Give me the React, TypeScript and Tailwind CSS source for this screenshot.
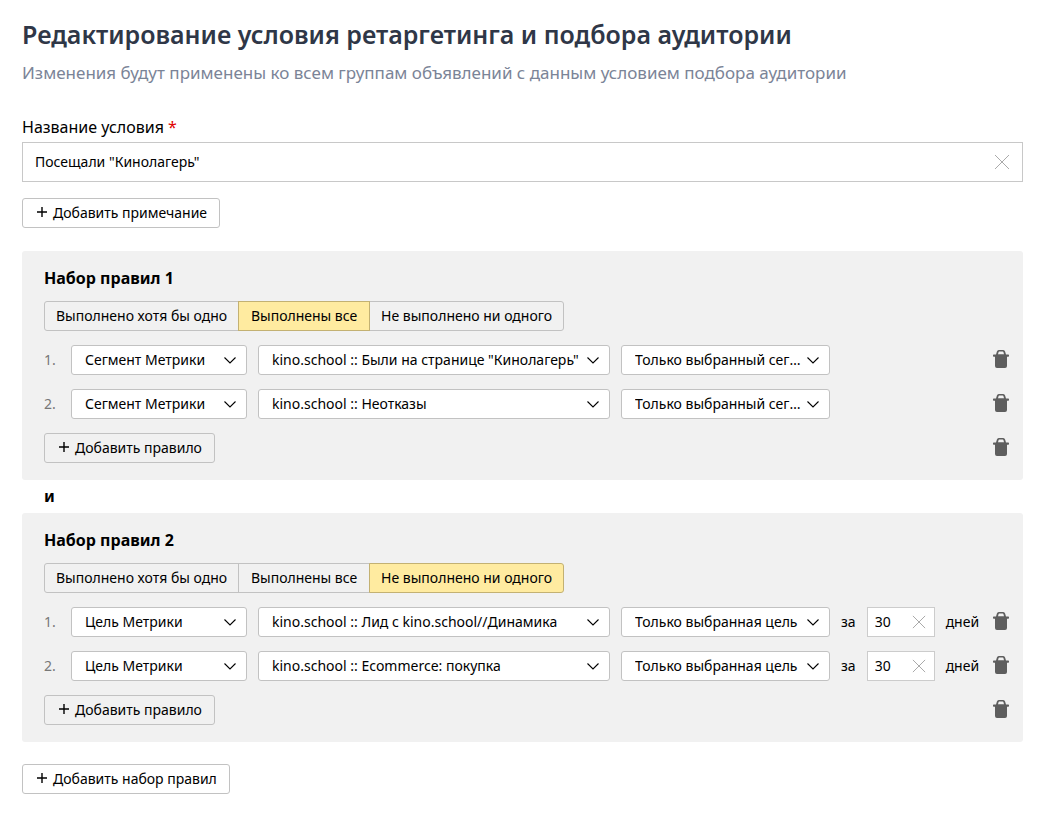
import React, { useState } from 'react';
import clsx from 'clsx';

type Rule = {
  type: string;
  source: string;
  scope: string;
  days?: number;
};

type RuleSet = {
  title: string;
  mode: number;
  rules: Rule[];
};

const modes = ['Выполнено хотя бы одно', 'Выполнены все', 'Не выполнено ни одного'];

const ruleSets: RuleSet[] = [
  {
    title: 'Набор правил 1',
    mode: 1,
    rules: [
      {
        type: 'Сегмент Метрики',
        source: 'kino.school :: Были на странице "Кинолагерь"',
        scope: 'Только выбранный сегмент',
      },
      {
        type: 'Сегмент Метрики',
        source: 'kino.school :: Неотказы',
        scope: 'Только выбранный сегмент',
      },
    ],
  },
  {
    title: 'Набор правил 2',
    mode: 2,
    rules: [
      {
        type: 'Цель Метрики',
        source: 'kino.school :: Лид с kino.school//Динамика',
        scope: 'Только выбранная цель',
        days: 30,
      },
      {
        type: 'Цель Метрики',
        source: 'kino.school :: Ecommerce: покупка',
        scope: 'Только выбранная цель',
        days: 30,
      },
    ],
  },
];

const PlusIcon = () => (
  <svg className="mb-0.5 h-2.5 w-2.5" viewBox="0 0 10 10" fill="none" stroke="currentColor" strokeWidth="1.4" aria-hidden="true">
    <path d="M5 0v10M0 5h10" />
  </svg>
);

const CrossIcon = ({ className }: { className: string }) => (
  <svg className={className} viewBox="0 0 16 16" fill="none" stroke="currentColor" aria-hidden="true">
    <path d="M1 1l14 14M15 1L1 15" vectorEffect="non-scaling-stroke" />
  </svg>
);

const TrashButton = ({ label }: { label: string }) => (
  <button type="button" aria-label={label} className="ml-auto shrink-0 pb-0.5 text-[#5e5e5e]">
    <svg className="h-[18px] w-4" viewBox="0 0 16 18" fill="currentColor" aria-hidden="true">
      <path
        fillRule="evenodd"
        d="M5.8 0h4.4a2 2 0 0 1 1.9 1.5l.9 3h2.3a.7.7 0 0 1 .7.7v.9a.7.7 0 0 1-.7.7H14V16a2 2 0 0 1-2 2H4a2 2 0 0 1-2-2V6.800H.7A.7.7 0 0 1 0 6.100v-.9a.7.7 0 0 1 .7-.7H3l.9-3A2 2 0 0 1 5.800 0zM6.300 1.500a.7.7 0 0 0-.7.5L5 4.200h6L10.400 2a.7.7 0 0 0-.7-.5z"
      />
    </svg>
  </button>
);

const AddButton = ({ children }: { children: React.ReactNode }) => (
  <button type="button" className="flex h-[30px] items-center gap-1.5 rounded-[3px] border border-[#c2c2c2] pr-3 pl-3.5 text-sm">
    <PlusIcon />
    {children}
  </button>
);

const Select = ({ label, value, className }: { label: string; value: string; className: string }) => (
  <div className={clsx('relative min-w-0', className)}>
    <select
      aria-label={label}
      defaultValue={value}
      className="h-[30px] w-full appearance-none truncate rounded-[3px] border border-[#c2c2c2] bg-white pr-6 pl-[13px] text-sm"
    >
      <option>{value}</option>
    </select>
    <svg
      className="pointer-events-none absolute top-3 right-[11px] h-[7px] w-3"
      viewBox="0 0 12 7"
      fill="none"
      stroke="currentColor"
      strokeWidth="1.1"
      aria-hidden="true"
    >
      <path d="M.5.5L6 6l5.5-5.5" />
    </svg>
  </div>
);

const RuleRow = ({ rule, index }: { rule: Rule; index: number }) => (
  <li className="flex items-center gap-[11px]">
    <span className="w-4 shrink-0 text-sm text-[#777]">{index + 1}.</span>
    <Select label="Тип условия" value={rule.type} className="w-44" />
    <Select label="Источник" value={rule.source} className="w-88" />
    <Select label="Область" value={rule.scope} className="w-[209px]" />
    {rule.days !== undefined && (
      <label className="flex items-center gap-[11px] text-sm">
        за
        <span className="flex h-[30px] w-[68px] items-center border border-[#ccc] bg-white pr-2 pl-[7px]">
          <input type="text" inputMode="numeric" defaultValue={rule.days} className="min-w-0 flex-1 outline-none" />
          <button type="button" aria-label="Очистить" className="text-[#aaa]">
            <CrossIcon className="h-3.5 w-3.5" />
          </button>
        </span>
        дней
      </label>
    )}
    <TrashButton label="Удалить правило" />
  </li>
);

const RuleSetCard = ({ set }: { set: RuleSet }) => {
  const [mode, setMode] = useState(set.mode);

  return (
    <section className="rounded-[3px] bg-[#f1f1f1] pt-[15px] pr-3.5 pb-[17px] pl-[22px]">
      <h2 className="text-base leading-6 font-bold">{set.title}</h2>
      <div className="mt-[11px] flex text-sm" role="group" aria-label={set.title}>
        {modes.map((name, i) => (
          <button
            key={name}
            type="button"
            aria-pressed={i === mode}
            onClick={() => setMode(i)}
            className={clsx(
              'h-[30px] min-w-[132px] border px-[11px] not-first:-ml-px first:rounded-l-[3px] last:rounded-r-[3px]',
              i === mode ? 'z-10 border-[#c3b172] bg-[#ffeba0]' : 'border-[#c2c2c2]'
            )}
          >
            {name}
          </button>
        ))}
      </div>
      <ol className="mt-3.5 flex flex-col gap-3.5">
        {set.rules.map((rule, i) => (
          <RuleRow key={rule.source} rule={rule} index={i} />
        ))}
      </ol>
      <div className="mt-3.5 flex items-center">
        <AddButton>Добавить правило</AddButton>
        <TrashButton label="Удалить набор" />
      </div>
    </section>
  );
};

const App = () => {
  return (
    <main className="bg-white pt-[18px] pr-6 pb-5 pl-[22px] font-['Noto_Sans',sans-serif] text-black">
      <h1 className="text-[25px] leading-8 font-semibold text-[#2f3747]">
        Редактирование условия ретаргетинга и подбора аудитории
      </h1>
      <p className="mt-[11px] text-[17px] leading-6 text-[#7b8497]">
        Изменения будут применены ко всем группам объявлений с данным условием подбора аудитории
      </p>

      <label htmlFor="condition-name" className="mt-[30px] block text-base leading-6">
        Название условия <span className="text-[#e00000]">*</span>
      </label>
      <div className="mt-[3px] flex h-10 items-center border border-[#c8c8c8] px-3">
        <input id="condition-name" type="text" defaultValue={'Посещали "Кинолагерь"'} className="min-w-0 flex-1 text-sm outline-none" />
        <button type="button" aria-label="Очистить" className="text-[#aaa]">
          <CrossIcon className="h-4 w-4" />
        </button>
      </div>

      <div className="mt-4 mb-[23px] flex">
        <AddButton>Добавить примечание</AddButton>
      </div>

      {ruleSets.map((set, i) => (
        <React.Fragment key={set.title}>
          {i > 0 && <p className="pl-[22px] text-base leading-[33px] font-bold">и</p>}
          <RuleSetCard set={set} />
        </React.Fragment>
      ))}

      <div className="mt-[22px] flex">
        <AddButton>Добавить набор правил</AddButton>
      </div>
    </main>
  );
};

export default App;
